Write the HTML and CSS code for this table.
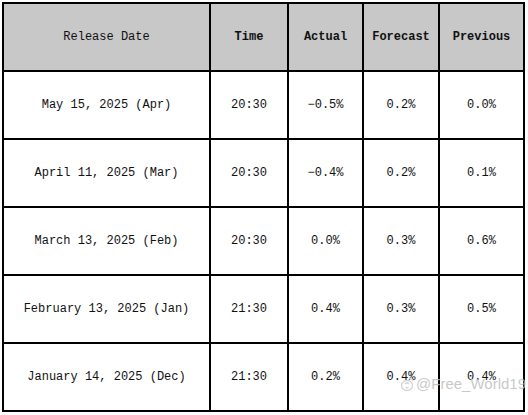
FILE: index.html
```html
<!DOCTYPE html>
<html lang="en">
<head>
  <meta charset="UTF-8">
  <meta name="viewport" content="width=device-width, initial-scale=1.0">
  <title>CPI Release Dates</title>
  <link rel="stylesheet" href="styles.css">
</head>
<body>
  <div class="wrap">
    <table class="release">
      <thead>
        <tr>
          <th class="date">Release Date</th>
          <th class="time bold">Time</th>
          <th class="actual bold">Actual</th>
          <th class="fcst bold">Forecast</th>
          <th class="prev bold">Previous</th>
        </tr>
      </thead>
      <tbody>
        <tr><td>May 15, 2025 (Apr)</td><td>20:30</td><td>&minus;0.5%</td><td>0.2%</td><td>0.0%</td></tr>
        <tr><td>April 11, 2025 (Mar)</td><td>20:30</td><td>&minus;0.4%</td><td>0.2%</td><td>0.1%</td></tr>
        <tr><td>March 13, 2025 (Feb)</td><td>20:30</td><td>0.0%</td><td>0.3%</td><td>0.6%</td></tr>
        <tr><td>February 13, 2025 (Jan)</td><td>21:30</td><td>0.4%</td><td>0.3%</td><td>0.5%</td></tr>
        <tr><td>January 14, 2025 (Dec)</td><td>21:30</td><td>0.2%</td><td>0.4%</td><td>0.4%</td></tr>
      </tbody>
    </table>
    <div class="watermark">
      <svg class="wm-icon" width="14" height="16" viewBox="0 0 14 16">
        <ellipse cx="7" cy="9.5" rx="5.5" ry="5" fill="none" stroke="#d4d4d4" stroke-width="1.3"/>
        <path d="M5 8 q2 -2 4 0 M5.5 11 q1.5 1.5 3 0" fill="none" stroke="#d4d4d4" stroke-width="1.2"/>
        <path d="M9 2 q3 0 4 3" fill="none" stroke="#d4d4d4" stroke-width="1.2"/>
      </svg>
      <span>@Free_World19</span>
    </div>
  </div>
</body>
</html>
```

FILE: styles.css
```css
body{margin:2px; background:#fff; font-family:"Liberation Mono", "DejaVu Sans Mono", monospace; color:#111;}
.wrap{position:relative; width:524px;}
.release{width:523px; border-collapse:collapse; table-layout:fixed; font-size:12px;}
.release th, .release td{border:2px solid #000; height:66px; padding:0; text-align:center; vertical-align:middle; white-space:nowrap;}
.release th{background-color:#c8c8c8; font-weight:normal; color:#111;}
.release th.bold{font-weight:bold;}
.release .date{width:205px;}
.release .time{width:76px;}
.release .actual{width:73px;}
.release .fcst{width:74px;}
.release .prev{width:auto;}
.watermark{position:absolute; left:398px; top:373px; display:flex; align-items:center; gap:2px; color:rgba(190,190,190,0.85); font-family:"Liberation Sans", Arial, sans-serif; font-size:15px; pointer-events:none;}
.wm-icon{display:block;}
```
